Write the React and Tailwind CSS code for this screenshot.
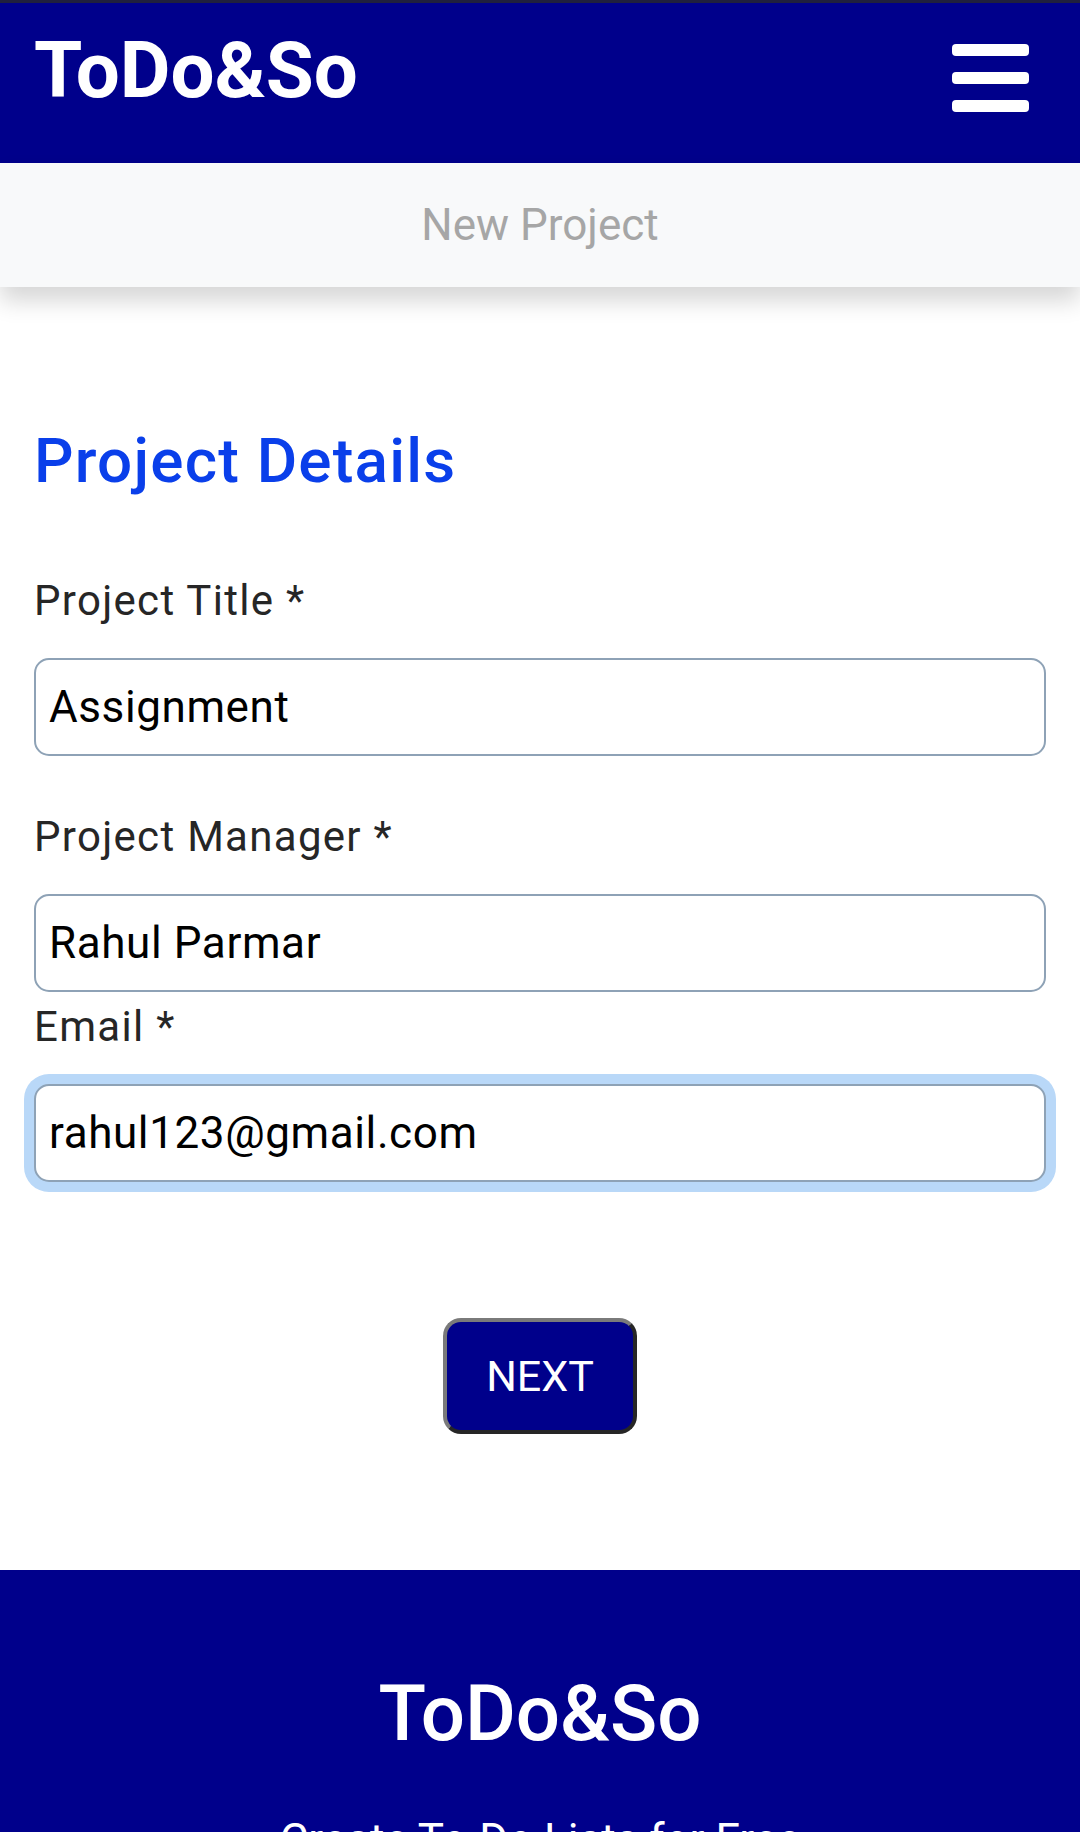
import { useState } from 'react';

function Field({ label, value, onChange, focused, className = '' }) {
  return (
    <div className={className}>
      <label className="block text-[42px] leading-[63px] tracking-[1.3px] text-[#262626]">{label}</label>
      <input
        type="text"
        value={value}
        onChange={(e) => onChange(e.target.value)}
        className={
          'mt-[26px] block w-full h-[98px] px-[13px] text-[44px] tracking-[0.6px] text-black bg-white border-[2px] border-[#8ea2b6] rounded-[15px] outline-none ' +
          (focused ? 'ring-[10px] ring-[#b9d8f8]' : '')
        }
      />
    </div>
  );
}

export default function App() {
  const [title, setTitle] = useState('Assignment');
  const [manager, setManager] = useState('Rahul Parmar');
  const [email, setEmail] = useState('rahul123@gmail.com');

  return (
    <div className="min-h-screen bg-white font-['Roboto','Liberation_Sans',sans-serif]">
      <header className="h-[163px] bg-[#00008b] border-t-[3px] border-[#20203e] flex justify-between items-start pl-[34px] pr-[51px]">
        <div className="mt-[29px] text-[78px] leading-[78px] font-bold text-white">ToDo&amp;So</div>
        <button className="mt-[41px] flex flex-col gap-[16px]" aria-label="menu">
          <span className="block w-[77px] h-[12px] rounded-[4px] bg-white" />
          <span className="block w-[77px] h-[12px] rounded-[4px] bg-white" />
          <span className="block w-[77px] h-[12px] rounded-[4px] bg-white" />
        </button>
      </header>

      <div className="relative h-[124px] bg-[#f8f9fa] flex items-center justify-center shadow-[0_14px_22px_rgba(0,0,0,0.16)]">
        <span className="text-[44px] text-[#a6a6a6]">New Project</span>
      </div>

      <main className="px-[34px] pt-[137px] pb-[136px]">
        <h1 className="text-[62px] leading-[74px] font-medium tracking-[1.2px] text-[#0a3fea]">Project Details</h1>
        <Field className="mt-[71px]" label="Project Title *" value={title} onChange={setTitle} />
        <Field className="mt-[49px]" label="Project Manager *" value={manager} onChange={setManager} />
        <Field className="mt-[3px]" label="Email *" value={email} onChange={setEmail} focused />

        <div className="mt-[136px] flex justify-center">
          <button className="h-[116px] px-[39px] bg-[#00008b] text-white text-[43px] rounded-[18px] border-[4px] border-t-[#7a7a7a] border-l-[#7a7a7a] border-r-[#262626] border-b-[#262626]">
            NEXT
          </button>
        </div>
      </main>

      <footer className="bg-[#00008b] text-white text-center pt-[105px] pb-[120px]">
        <div className="text-[78px] leading-[78px] font-medium">ToDo&amp;So</div>
        <p className="mt-[61px] text-[44px] leading-[52px]">Create To-Do Lists for Free</p>
      </footer>
    </div>
  );
}
